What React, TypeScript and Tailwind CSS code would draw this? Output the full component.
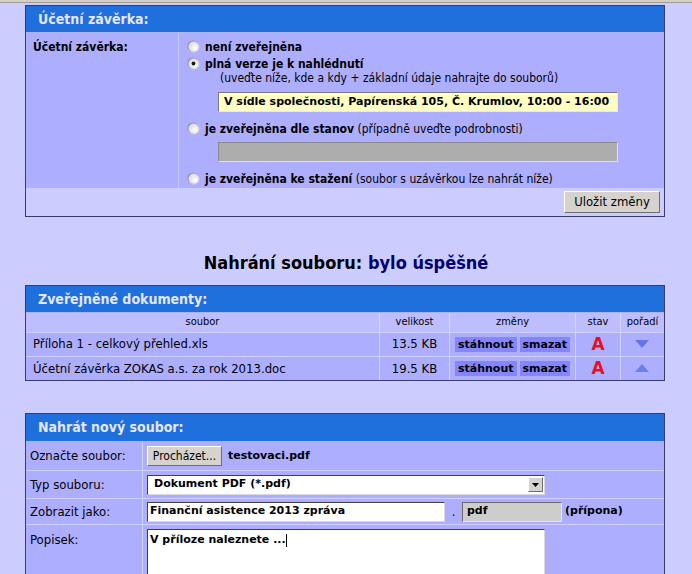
import React from "react";

const ui = "font-['DejaVu_Sans_Condensed','DejaVu_Sans',sans-serif]";
const inputFont = "font-['DejaVu_Sans','Verdana',sans-serif] font-bold text-[11px]";

const Radio = ({ checked = false }: { checked?: boolean }) => (
    <svg width="13" height="13" viewBox="0 0 13 13" className="shrink-0">
        <defs>
            <linearGradient id="rg" x1="0" y1="0" x2="1" y2="1">
                <stop offset="0" stopColor="#6f6f80" />
                <stop offset="1" stopColor="#f4f4f4" />
            </linearGradient>
            <radialGradient id="rf" cx="0.65" cy="0.65" r="0.6">
                <stop offset="0" stopColor="#ffffff" />
                <stop offset="1" stopColor="#dcdce2" />
            </radialGradient>
        </defs>
        <circle cx="6.5" cy="6.5" r="6" fill="url(#rg)" />
        <circle cx="6.5" cy="6.5" r="5" fill="url(#rf)" />
        {checked && <circle cx="6.5" cy="6.5" r="1.9" fill="#1a1a1a" />}
    </svg>
);

const PanelHeader = ({ title, h }: { title: string; h: string }) => (
    <div className={`${h} bg-[#1f6fdc] border-b border-[#a8b4f4] flex items-center pl-[12px] text-[#e6e6f6] font-bold text-[14px]`}>
        {title}
    </div>
);

const XpButton = ({ children, className = "" }: { children: React.ReactNode; className?: string }) => (
    <div className={`bg-[#d6d3ce] border border-t-white border-l-white border-b-[#6f6f6f] border-r-[#6f6f6f] text-black flex items-center justify-center ${className}`}>
        {children}
    </div>
);

const Arrow = ({ up }: { up?: boolean }) => (
    <svg width="14" height="9" viewBox="0 0 14 9">
        <polygon points={up ? "7,0 14,8 0,8" : "0,0 14,0 7,8"} fill={up ? "#6c7fe6" : "#6474e8"} />
    </svg>
);

const docs = [
    { name: "Příloha 1 - celkový přehled.xls", size: "13.5 KB", up: false },
    { name: "Účetní závěrka ZOKAS a.s. za rok 2013.doc", size: "19.5 KB", up: true },
];

export default function App() {
    return (
        <div className={`min-h-screen bg-[#ccccff] text-black ${ui}`}>
            <div className="h-[3px] bg-[#d4d0c8] border-b border-[#a09c94]" />

            <div className="pl-[25px] w-[665px]">
                {/* Účetní závěrka */}
                <div className="mt-[2px] border border-[#39396b]">
                    <PanelHeader title="Účetní závěrka:" h="h-[27px]" />
                    <div className="grid grid-cols-[153px_1fr] bg-[#aeaefe]">
                        <div className="pl-[7px] pt-[5px] font-bold text-[12px] border-r border-[#c8c8ff]">Účetní závěrka:</div>
                        <div className="pl-[8px] pt-[5px] pb-[1px] text-[12px]">
                            <div className="h-[17px] flex items-center gap-[5px]">
                                <Radio />
                                <span className="font-bold">není zveřejněna</span>
                            </div>
                            <div className="h-[17px] flex items-center gap-[5px]">
                                <Radio checked />
                                <span className="font-bold">plná verze je k nahlédnutí</span>
                            </div>
                            <div className="h-[13px] leading-[13px] pl-[33px]">
                                (uveďte níže, kde a kdy + základní údaje nahrajte do souborů)
                            </div>
                            <div className={`mt-[7px] ml-[31px] w-[400px] h-[20px] bg-[#ffffc4] border border-t-[#7b7b7b] border-l-[#7b7b7b] border-b-[#e8e8e8] border-r-[#e8e8e8] pl-[5px] flex items-center overflow-hidden whitespace-nowrap ${inputFont}`}>
                                V sídle společnosti, Papírenská 105, Č. Krumlov, 10:00 - 16:00
                            </div>
                            <div className="mt-[8px] h-[17px] flex items-center gap-[5px]">
                                <Radio />
                                <span><b>je zveřejněna dle stanov</b> (případně uveďte podrobnosti)</span>
                            </div>
                            <div className="mt-[5px] ml-[31px] w-[400px] h-[20px] bg-[#adadad] border border-t-[#8a8a8a] border-l-[#8a8a8a] border-b-[#e0e0e0] border-r-[#e0e0e0]" />
                            <div className="mt-[8px] h-[17px] flex items-center gap-[5px]">
                                <Radio />
                                <span><b>je zveřejněna ke stažení</b> (soubor s uzávěrkou lze nahrát níže)</span>
                            </div>
                        </div>
                    </div>
                    <div className="h-[28px] bg-[#ccccff] flex justify-end items-start pt-[3px] pr-[4px]">
                        <XpButton className="w-[96px] h-[22px] text-[13px]">Uložit změny</XpButton>
                    </div>
                </div>
            </div>

            <div className="mt-[35px] text-center text-[18px] font-bold leading-[22px]">
                Nahrání souboru: <span className="text-[#000070]">bylo úspěšné</span>
            </div>

            <div className="pl-[25px] w-[665px]">
                {/* Zveřejněné dokumenty */}
                <div className="mt-[11px] border border-[#39396b]">
                    <PanelHeader title="Zveřejněné dokumenty:" h="h-[27px]" />
                    <table className="w-full border-collapse text-[11px]">
                        <thead>
                            <tr className="bg-[#bebeff] h-[19px]">
                                <th className="font-normal border-r border-[#d4d4ff]">soubor</th>
                                <th className="font-normal w-[70px] border-r border-[#d4d4ff]">velikost</th>
                                <th className="font-normal w-[126px] border-r border-[#d4d4ff]">změny</th>
                                <th className="font-normal w-[45px] border-r border-[#d4d4ff]">stav</th>
                                <th className="font-normal">pořadí</th>
                            </tr>
                        </thead>
                        <tbody>
                            {docs.map((d) => (
                                <tr key={d.name} className="bg-[#aeaefe] h-[24px] border-t border-[#d0d0ff]">
                                    <td className="pl-[7px] text-[13px] border-r border-[#d0d0ff]">{d.name}</td>
                                    <td className="text-center text-[13px] border-r border-[#d0d0ff]">{d.size}</td>
                                    <td className="border-r border-[#d0d0ff]">
                                        <div className="flex justify-center gap-[3px] font-bold text-[11px] font-['DejaVu_Sans',sans-serif]">
                                            <span className="bg-[#8585fd] px-[3px] leading-[15px]">stáhnout</span>
                                            <span className="bg-[#8585fd] px-[3px] leading-[15px]">smazat</span>
                                        </div>
                                    </td>
                                    <td className="text-center border-r border-[#d0d0ff] font-['DejaVu_Sans',sans-serif] font-black text-[17px] leading-none text-[#e8101c]">A</td>
                                    <td>
                                        <div className="flex justify-center"><Arrow up={d.up} /></div>
                                    </td>
                                </tr>
                            ))}
                        </tbody>
                    </table>
                </div>

                {/* Nahrát nový soubor */}
                <div className="mt-[32px] border border-[#39396b] border-b-0">
                    <PanelHeader title="Nahrát nový soubor:" h="h-[28px]" />
                    <div className="grid grid-cols-[116px_1fr] gap-px bg-[#d0d0ff] text-[13px]">
                        <div className="bg-[#aeaefe] h-[28px] pl-[4px] flex items-center">Označte soubor:</div>
                        <div className="bg-[#aeaefe] h-[28px] pl-[4px] flex items-center gap-[6px]">
                            <XpButton className="w-[75px] h-[20px] text-[12px]">Procházet...</XpButton>
                            <span className={inputFont}>testovaci.pdf</span>
                        </div>

                        <div className="bg-[#aeaefe] h-[27px] pl-[4px] flex items-center">Typ souboru:</div>
                        <div className="bg-[#aeaefe] h-[27px] pl-[4px] flex items-center">
                            <div className={`w-[398px] h-[20px] bg-white border border-t-[#404040] border-l-[#404040] border-b-[#d8d8d8] border-r-[#d8d8d8] flex items-center justify-between pl-[6px] pr-[1px] ${inputFont}`}>
                                <span>Dokument PDF (*.pdf)</span>
                                <XpButton className="w-[15px] h-[15px]">
                                    <svg width="7" height="4" viewBox="0 0 7 4"><polygon points="0,0 7,0 3.5,4" fill="#000" /></svg>
                                </XpButton>
                            </div>
                        </div>

                        <div className="bg-[#aeaefe] h-[25px] pl-[4px] flex items-center">Zobrazit jako:</div>
                        <div className="bg-[#aeaefe] h-[25px] pl-[4px] flex items-center">
                            <div className={`w-[298px] h-[20px] bg-white border border-t-[#404040] border-l-[#404040] border-b-[#d8d8d8] border-r-[#d8d8d8] flex items-center pl-[2px] ${inputFont}`}>
                                Finanční asistence 2013 zpráva
                            </div>
                            <span className="w-[17px] text-center">.</span>
                            <div className={`w-[100px] h-[20px] bg-[#cdcdcd] border border-t-[#6c6c6c] border-l-[#6c6c6c] border-b-[#e4e4e4] border-r-[#e4e4e4] flex items-center pl-[4px] ${inputFont}`}>
                                pdf
                            </div>
                            <span className={`ml-[3px] ${inputFont}`}>(přípona)</span>
                        </div>

                        <div className="bg-[#aeaefe] h-[60px] pl-[4px] pt-[5px]">Popisek:</div>
                        <div className="bg-[#aeaefe] h-[60px] pl-[4px] pt-[4px]">
                            <div className={`w-[398px] h-[60px] bg-white border border-t-[#404040] border-l-[#404040] border-b-[#d8d8d8] border-r-[#d8d8d8] pl-[2px] pt-[2px] ${inputFont}`}>
                                V příloze naleznete ...<span className="inline-block w-px h-[13px] bg-black align-middle" />
                            </div>
                        </div>
                    </div>
                </div>
            </div>
        </div>
    );
}
